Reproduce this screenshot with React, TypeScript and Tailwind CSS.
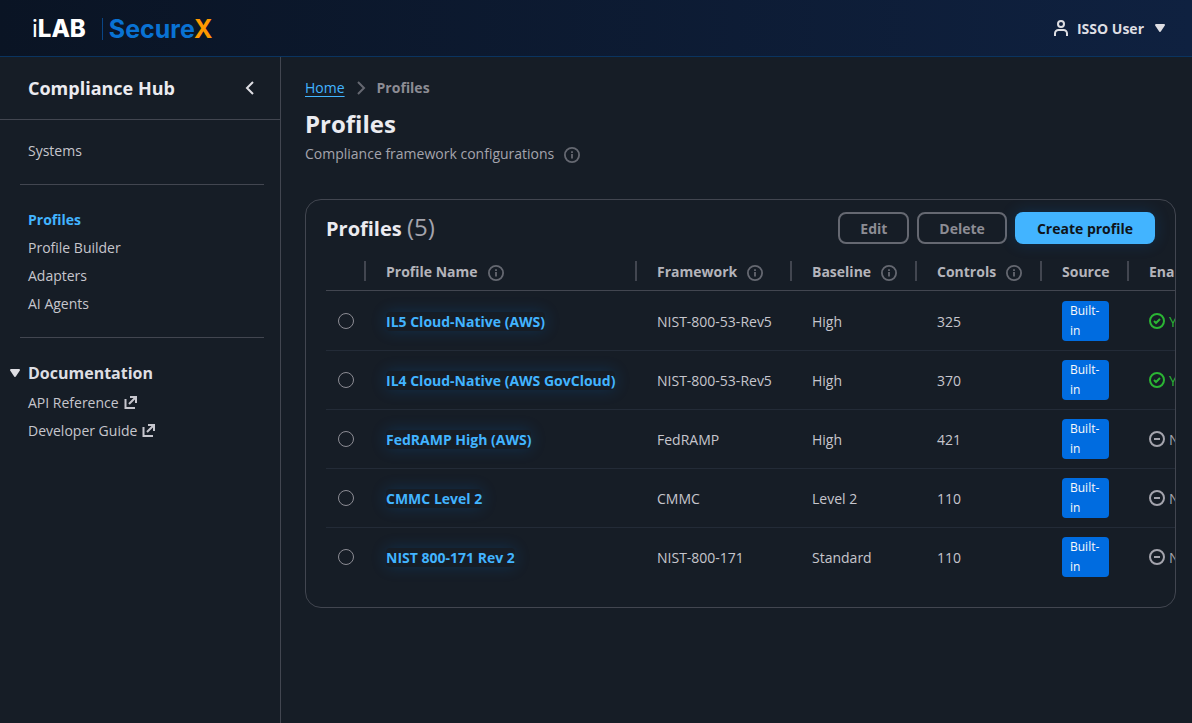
import type { ReactNode } from 'react'

interface Profile {
  id: string
  name: string
  framework: string
  baseline: string
  controls: number
  source: string
  enabled: boolean
}

const PROFILES: Profile[] = [
  { id: 'il5', name: 'IL5 Cloud-Native (AWS)', framework: 'NIST-800-53-Rev5', baseline: 'High', controls: 325, source: 'Built-in', enabled: true },
  { id: 'il4', name: 'IL4 Cloud-Native (AWS GovCloud)', framework: 'NIST-800-53-Rev5', baseline: 'High', controls: 370, source: 'Built-in', enabled: true },
  { id: 'fedramp', name: 'FedRAMP High (AWS)', framework: 'FedRAMP', baseline: 'High', controls: 421, source: 'Built-in', enabled: false },
  { id: 'cmmc', name: 'CMMC Level 2', framework: 'CMMC', baseline: 'Level 2', controls: 110, source: 'Built-in', enabled: false },
  { id: 'nist171', name: 'NIST 800-171 Rev 2', framework: 'NIST-800-171', baseline: 'Standard', controls: 110, source: 'Built-in', enabled: false },
]

const COLUMNS = [
  { label: 'Profile Name', info: true, width: 'w-[271px]' },
  { label: 'Framework', info: true, width: 'w-[155px]' },
  { label: 'Baseline', info: true, width: 'w-[125px]' },
  { label: 'Controls', info: true, width: 'w-[125px]' },
  { label: 'Source', info: false, width: 'w-[87px]' },
  { label: 'Enabled', info: false, width: 'w-[120px]' },
]

function Icon({ children, className = '' }: { children: ReactNode; className?: string }) {
  return (
    <svg
      viewBox="0 0 16 16"
      className={`size-4 shrink-0 ${className}`}
      fill="none"
      stroke="currentColor"
      strokeWidth="2"
      strokeLinejoin="round"
      aria-hidden="true"
    >
      {children}
    </svg>
  )
}

function UserIcon() {
  return (
    <Icon>
      <circle cx="8" cy="4" r="3" />
      <path d="M2 16v-2.5A3.5 3.5 0 0 1 5.5 10h5a3.5 3.5 0 0 1 3.5 3.5V16" />
    </Icon>
  )
}

function CaretDown() {
  return (
    <Icon>
      <path d="M4 5h8l-4 6-4-6z" fill="currentColor" />
    </Icon>
  )
}

function ExternalIcon() {
  return (
    <Icon>
      <path d="M2.5 4v9H12" strokeLinejoin="miter" />
      <path d="M7 2h6v6M13 2L6 9" strokeLinejoin="miter" />
      <path d="M9.5 2H13v3.5z" fill="currentColor" stroke="none" />
    </Icon>
  )
}

function InfoButton({ label }: { label: string }) {
  return (
    <button type="button" aria-label={label} className="flex pt-0.5 text-[#656871]">
      <Icon>
        <circle cx="8" cy="8" r="7.1" strokeWidth="1.8" />
        <path d="M8 7v4.5M8 4.2v1.8" strokeWidth="1.8" />
      </Icon>
    </button>
  )
}

function NavItem({ children, active = false, external = false }: { children: ReactNode; active?: boolean; external?: boolean }) {
  return (
    <li>
      <a
        href="#"
        className={`flex items-center gap-1 text-sm leading-5 ${active ? 'font-bold text-[#42b4ff]' : 'text-[#c6c6cd]'}`}
      >
        {children}
        {external && <ExternalIcon />}
      </a>
    </li>
  )
}

function TopBar() {
  return (
    <header className="flex h-[57px] shrink-0 items-center justify-between border-b border-[#0a3460] bg-linear-to-r from-[#0a1424] to-[#0f2140] pr-6 pl-8">
      <a href="#" className="flex items-center pt-0.5 font-[Inter,sans-serif] text-2xl leading-8">
        <span className="text-white">
          i<span className="font-extrabold">LAB</span>
        </span>
        <span className="ml-4 h-[22px] w-px bg-[#0a4585]" />
        <span className="ml-1.5 text-[25px] font-bold text-[#0972d3]">
          Secure<span className="text-[#ff9900]">X</span>
        </span>
      </a>
      <button type="button" className="flex items-center gap-2 text-sm font-bold text-[#dedee3]">
        <UserIcon />
        <span className="pt-0.5">ISSO User</span>
        <CaretDown />
      </button>
    </header>
  )
}

function Sidebar() {
  return (
    <aside className="w-[281px] shrink-0 border-r border-[#424650]">
      <div className="flex h-[63px] items-center justify-between border-b border-[#424650] pr-[22px] pl-7">
        <h2 className="text-lg font-bold text-[#ebebf0]">Compliance Hub</h2>
        <button type="button" aria-label="Close navigation" className="text-[#dedee3]">
          <Icon>
            <path d="M11 2L5 8l6 6" strokeLinejoin="miter" />
          </Icon>
        </button>
      </div>
      <nav className="pt-5 pr-4 pl-7">
        <ul className="py-px">
          <NavItem>Systems</NavItem>
        </ul>
        <hr className="mt-[22px] mb-[25px] -ml-2 border-[#424650]" />
        <ul className="flex flex-col gap-2">
          <NavItem active>Profiles</NavItem>
          <NavItem>Profile Builder</NavItem>
          <NavItem>Adapters</NavItem>
          <NavItem>AI Agents</NavItem>
        </ul>
        <hr className="mt-[23px] mb-[25px] -ml-2 border-[#424650]" />
        <button type="button" className="-ml-[21px] flex items-center gap-[5px] leading-5 font-bold text-[#dedee3]">
          <CaretDown />
          Documentation
        </button>
        <ul className="mt-2.5 flex flex-col gap-2">
          <NavItem external>API Reference</NavItem>
          <NavItem external>Developer Guide</NavItem>
        </ul>
      </nav>
    </aside>
  )
}

function EnabledStatus({ enabled }: { enabled: boolean }) {
  return (
    <span className={`flex items-center gap-1 ${enabled ? 'text-[#2bb534]' : 'text-[#a4a4ad]'}`}>
      <Icon>
        <circle cx="8" cy="8" r="7" />
        {enabled ? <path d="M5 8l2 2 4-4" strokeLinejoin="miter" /> : <path d="M5 8h6" />}
      </Icon>
      <span className="pt-0.5">{enabled ? 'Yes' : 'No'}</span>
    </span>
  )
}

function ProfilesTable() {
  return (
    <div className="overflow-x-auto pl-5 [scrollbar-width:none]">
      <table className="w-full min-w-[923px] table-fixed border-separate border-spacing-0 text-left text-sm leading-5">
        <thead>
          <tr>
            <th aria-label="Select" className="relative h-[39px] w-10 border-b border-[#424650]">
              <span className="absolute top-[9px] right-0 h-5 w-0.5 bg-[#424650]" />
            </th>
            {COLUMNS.map((col, i) => (
              <th
                key={col.label}
                scope="col"
                className={`relative border-b border-[#424650] pt-0.5 pl-5 font-bold text-[#b4b4bb] ${col.width}`}
              >
                <div className="flex items-center gap-2.5">
                  {col.label}
                  {col.info && <InfoButton label={`About ${col.label}`} />}
                </div>
                {i < COLUMNS.length - 1 && (
                  <span className="absolute top-[9px] right-0 h-5 w-0.5 bg-[#424650]" />
                )}
              </th>
            ))}
          </tr>
        </thead>
        <tbody className="text-[#c6c6cd] [&_td]:h-[59px] [&_td]:border-b [&_td]:border-[#232b37] [&_tr:first-child_td]:h-[60px] [&_tr:last-child_td]:border-transparent">
          {PROFILES.map((p) => (
            <tr key={p.id}>
              <td className="pl-3">
                <input
                  type="radio"
                  name="profile"
                  aria-label={`Select ${p.name}`}
                  className="block size-4 appearance-none rounded-full border border-[#8c8c94]"
                />
              </td>
              <td className="pt-0.5 pl-5">
                <a href="#" className="rounded-sm font-bold text-[#42b4ff] shadow-[0_0_15px_rgba(9,114,211,0.22)]">
                  {p.name}
                </a>
              </td>
              <td className="pt-0.5 pl-5">{p.framework}</td>
              <td className="pt-0.5 pl-5">{p.baseline}</td>
              <td className="pt-0.5 pl-5">{p.controls}</td>
              <td className="px-5">
                <span className="block rounded-sm bg-[#006ce0] px-2 text-xs leading-5 text-[#f9f9fa]">{p.source}</span>
              </td>
              <td className="pl-5">
                <EnabledStatus enabled={p.enabled} />
              </td>
            </tr>
          ))}
        </tbody>
      </table>
    </div>
  )
}

export default function App() {
  return (
    <div className="flex min-h-screen flex-col bg-[#161d26] font-['Open_Sans',sans-serif] text-[#c6c6cd]">
      <TopBar />
      <div className="flex flex-1">
        <Sidebar />
        <main className="min-w-0 flex-1 pt-[21px] pr-4 pl-6">
          <nav aria-label="Breadcrumb" className="flex items-center gap-2 text-sm leading-5">
            <a href="#" className="text-[#42b4ff] underline underline-offset-3">Home</a>
            <Icon className="text-[#656871]">
              <path d="M5 2l6 6-6 6" strokeLinejoin="miter" />
            </Icon>
            <span className="font-bold text-[#8c8c94]">Profiles</span>
          </nav>
          <h1 className="mt-3 text-2xl leading-7 font-bold text-[#ebebf0]">Profiles</h1>
          <div className="mt-1.5 flex items-center gap-2.5 text-sm leading-5 text-[#a4a4ad]">
            Compliance framework configurations
            <InfoButton label="About profiles" />
          </div>

          <section className="mt-[35px] overflow-hidden rounded-2xl border border-[#424650] pt-3 pb-5">
            <div className="flex h-8 items-center justify-between px-5">
              <h2 className="pt-0.5 text-xl leading-8 font-bold text-[#ebebf0]">
                Profiles <span className="text-2xl leading-none font-normal text-[#a4a4ad]">(5)</span>
              </h2>
              <div className="flex gap-2 text-sm leading-5 font-bold">
                <button type="button" className="h-8 rounded-lg border-2 border-[#656871] px-5 pt-0.5 text-[#8c8c94]">Edit</button>
                <button type="button" className="h-8 rounded-lg border-2 border-[#656871] px-5 pt-0.5 text-[#8c8c94]">Delete</button>
                <button type="button" className="h-8 rounded-lg bg-[#42b4ff] px-[22px] pt-0.5 text-[#0f141a] shadow-[0_0_15px_rgba(9,114,211,0.22)]">
                  Create profile
                </button>
              </div>
            </div>
            <div className="mt-2">
              <ProfilesTable />
            </div>
          </section>
        </main>
      </div>
    </div>
  )
}
